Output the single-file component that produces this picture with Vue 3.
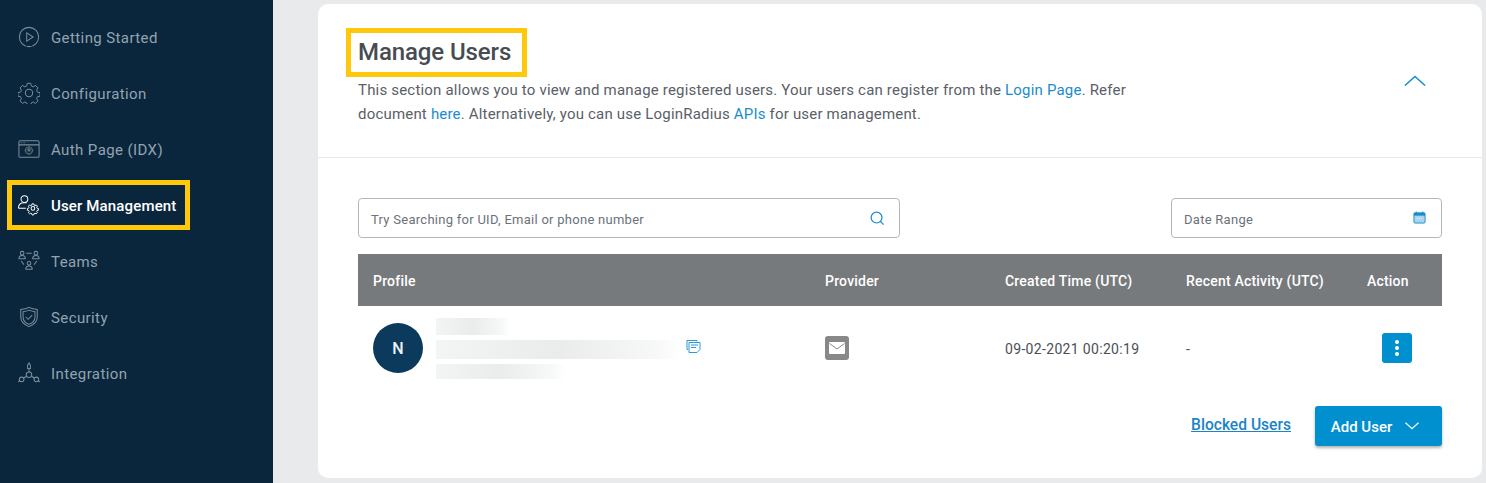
<script setup>
const navItems = [
  { label: "Getting Started", icon: "play" },
  { label: "Configuration", icon: "gear" },
  { label: "Auth Page (IDX)", icon: "auth" },
  { label: "User Management", icon: "user", active: true },
  { label: "Teams", icon: "teams" },
  { label: "Security", icon: "shield" },
  { label: "Integration", icon: "integration" },
];
const gearPath =
  "M10 1.5h4l.6 3 2.2 1 2.6-1.6 2.8 2.8-1.6 2.6 1 2.2 3 .6v4l-3 .6-1 2.2 1.6 2.6-2.8 2.8-2.6-1.6-2.2 1-.6 3h-4l-.6-3-2.2-1-2.6 1.6-2.8-2.8 1.6-2.6-1-2.2-3-.6v-4l3-.6 1-2.2-1.6-2.6 2.8-2.8 2.6 1.6 2.2-1z";
</script>

<template>
  <div class="page">
    <aside class="sidebar">
      <nav class="nav">
        <a
          v-for="item in navItems"
          :key="item.label"
          class="nav__item"
          :class="{ 'nav__item--active': item.active }"
        >
          <svg class="nav__icon" viewBox="0 0 24 24" fill="none" stroke="currentColor" stroke-width="1.1">
            <template v-if="item.icon === 'play'">
              <circle cx="12" cy="12" r="10.5" />
              <path d="M9.5 7.5v9l7-4.500z" />
            </template>
            <template v-else-if="item.icon === 'gear'">
              <path :d="gearPath" transform="translate(0.5 0) scale(0.96)" />
              <circle cx="12" cy="12" r="4" />
            </template>
            <template v-else-if="item.icon === 'auth'">
              <rect x="1" y="3" width="22" height="18" rx="1.5" />
              <path d="M1 7.5h22M3 5.2h.8M5 5.2h.8M7 5.2h.8" />
              <path :d="gearPath" transform="translate(8 9) scale(0.33)" stroke-width="2.6" />
              <circle cx="12" cy="13" r="1.2" />
            </template>
            <template v-else-if="item.icon === 'user'">
              <circle cx="7" cy="5.5" r="3.700" />
              <path d="M0.500 15.500c0-4 2-6 6-6h3M0.500 15.500h8" />
              <path :d="gearPath" transform="translate(10.500 10) scale(0.48)" stroke-width="2.200" />
              <circle cx="16.260" cy="15.760" r="2" />
            </template>
            <template v-else-if="item.icon === 'teams'">
              <circle cx="4.5" cy="3.5" r="2" />
              <path d="M1 9.5c0-2.5 1.5-3.500 3.500-3.500S8 7 8 9.500z" />
              <circle cx="19.5" cy="3.5" r="2" />
              <path d="M16 9.5c0-2.5 1.5-3.500 3.500-3.500S23 7 23 9.500z" />
              <circle cx="12" cy="14.5" r="2" />
              <path d="M8.5 21c0-2.5 1.5-3.500 3.500-3.500s3.500 1 3.500 3.500z" />
              <path d="M9 3.500h6M3.500 12l3 4M20.500 12l-3 4" />
            </template>
            <template v-else-if="item.icon === 'shield'">
              <path d="M12 1.500c3 1.500 6 2 9 2.200v8.300c0 5-3.500 8.500-9 10.500C6.500 20.500 3 17 3 12V3.700C6 3.500 9 3 12 1.500z" />
              <path d="M12 4.500c2.200 1 4.500 1.500 6.500 1.700V12c0 3.800-2.500 6.500-6.500 8-4-1.500-6.500-4.200-6.500-8V6.200c2-.2 4.300-.7 6.500-1.700z" />
              <path d="M8.500 12l2.500 2.500 4.500-4.500" />
            </template>
            <template v-else>
              <circle cx="12" cy="14" r="3" />
              <path d="M12 11V7M9.400 15.500l-3.400 2M14.600 15.500l3.400 2" />
              <path d="M10.500 7V3.500L12 1l1.500 2.500V7z" />
              <circle cx="4" cy="19" r="2.500" />
              <circle cx="20" cy="19" r="2.500" />
              <path d="M0 21.500l2-1M24 21.500l-2-1" />
            </template>
          </svg>
          <span class="nav__label">{{ item.label }}</span>
        </a>
      </nav>
    </aside>

    <main class="content">
      <section class="card">
        <header class="card__head">
          <div class="card__intro">
            <h1 class="card__title">Manage Users</h1>
            <p class="card__desc">
              This section allows you to view and manage registered users. Your users can register from the
              <a class="link">Login Page</a>. Refer<br />
              document <a class="link">here</a>. Alternatively, you can use LoginRadius
              <a class="link">APIs</a> for user management.
            </p>
          </div>
          <svg class="card__toggle" viewBox="0 0 24 12" fill="none" stroke="#0f8fd0" stroke-width="1.600">
            <path d="M1 11.500L12 1.500l11 10" />
          </svg>
        </header>

        <div class="card__body">
          <div class="filters">
            <div class="field field--search">
              <span>Try Searching for UID, Email or phone number</span>
              <svg class="field__icon" viewBox="0 0 16 16" fill="none" stroke="#1a8ccb" stroke-width="1.300">
                <circle cx="7" cy="7" r="5.800" />
                <path d="M11.200 11.200l3.300 3.300" />
              </svg>
            </div>
            <div class="field field--date">
              <span>Date Range</span>
              <svg class="field__cal" viewBox="0 0 14 14">
                <rect x="1" y="2" width="12" height="11" rx="1.200" fill="#a9d4ee" stroke="#1a8ccb" />
                <rect x="1" y="2" width="12" height="3" fill="#1a8ccb" />
                <path d="M3.500 0.500v2M10.500 0.500v2" stroke="#1a8ccb" />
                <path d="M4 8h1M6.500 8h1M9 8h1" stroke="#fff" />
              </svg>
            </div>
          </div>

          <div class="table">
            <div class="table__row table__row--head">
              <div>Profile</div>
              <div>Provider</div>
              <div>Created Time (UTC)</div>
              <div>Recent Activity (UTC)</div>
              <div>Action</div>
            </div>
            <div class="table__row">
              <div class="profile">
                <div class="avatar">N</div>
                <div class="profile__lines">
                  <div class="blur blur--name"></div>
                  <div class="blur blur--email"></div>
                  <div class="blur blur--uid"></div>
                </div>
                <svg class="copy" viewBox="0 0 15 14" fill="none" stroke="#2a9bd8" stroke-width="1">
                  <path d="M2 10.500H1V1.500h10v1" />
                  <path d="M3 3.500h11v7l-3 3H3z" fill="#fff" />
                  <path d="M5 6h7M5 8.500h5" />
                </svg>
              </div>
              <div>
                <span class="provider">
                  <svg viewBox="0 0 16 12" width="16" height="12">
                    <rect width="16" height="12" rx="1" fill="#fff" />
                    <path d="M0.500 1.500L8 7l7.500-5.500" fill="none" stroke="#888" />
                  </svg>
                </span>
              </div>
              <div class="table__text">09-02-2021 00:20:19</div>
              <div class="table__text">-</div>
              <div class="table__action">
                <button class="kebab" type="button" aria-label="Actions"><i></i><i></i><i></i></button>
              </div>
            </div>
          </div>

          <div class="actions">
            <a class="blocked">Blocked Users</a>
            <button class="add" type="button">
              <span class="add__label">Add User</span>
              <svg viewBox="0 0 14 8" width="14" height="8" fill="none" stroke="#fff" stroke-width="1.200">
                <path d="M0.500 0.700L7 6.800l6.500-6.100" />
              </svg>
            </button>
          </div>
        </div>
      </section>
    </main>
  </div>
</template>

<style>
html,
body {
  margin: 0;
  background: #e8eaec;
}
</style>

<style scoped>
.page {
  display: flex;
  height: 483px;
  overflow: hidden;
  font-family: Roboto, "Liberation Sans", sans-serif;
  color: #4a5056;
  background: #e8eaec;
}

.sidebar {
  width: 273px;
  flex: none;
  background: #0a263c;
  padding-top: 9px;
  box-sizing: border-box;
}
.nav {
  display: flex;
  flex-direction: column;
}
.nav__item {
  position: relative;
  height: 56px;
  display: flex;
  align-items: center;
  gap: 11px;
  padding-left: 18px;
  font-size: 15px;
  letter-spacing: 0.4px;
  color: #93a3b0;
}
.nav__label {
  padding-top: 2px;
}
.nav__icon {
  width: 22px;
  height: 22px;
  flex: none;
  color: #7d8d9a;
}
.nav__item--active {
  color: #fff;
  font-weight: 500;
  letter-spacing: 0.15px;
}
.nav__item--active .nav__icon {
  color: #fff;
}
.nav__item--active::after {
  content: "";
  position: absolute;
  left: 7px;
  top: 3px;
  width: 183px;
  height: 50px;
  border: 5px solid #ffc80a;
  box-sizing: border-box;
}

.content {
  flex: 1;
  padding: 4px 4px 5px 45px;
  min-width: 0;
}
.card {
  height: 100%;
  background: #fff;
  border-radius: 10px;
  box-sizing: border-box;
}
.card__head {
  height: 154px;
  box-sizing: border-box;
  border-bottom: 1px solid #e8eaec;
  padding: 24px 56px 0 40px;
  display: flex;
  justify-content: space-between;
}
.card__title {
  position: relative;
  margin: 0;
  font-size: 24px;
  line-height: 49px;
  font-weight: 500;
  color: #474c52;
  letter-spacing: -0.1px;
}
.card__title::after {
  content: "";
  position: absolute;
  left: -12px;
  top: 0;
  width: 181px;
  height: 49px;
  border: 5px solid #ffc80a;
  box-sizing: border-box;
}
.card__desc {
  margin: 1px 0 0;
  font-size: 15px;
  letter-spacing: 0.19px;
  line-height: 24px;
  color: #5a6067;
  white-space: nowrap;
}
.card__toggle {
  width: 22px;
  height: 11px;
  margin-top: 47px;
}
.link {
  color: #1a8ccb;
}

.card__body {
  padding: 40px 40px 0;
}
.filters {
  display: flex;
  justify-content: space-between;
}
.field {
  height: 40px;
  box-sizing: border-box;
  border: 1px solid #b5b7b9;
  border-radius: 4px;
  padding: 0 14px 0 12px;
  display: flex;
  align-items: center;
  justify-content: space-between;
  font-size: 13px;
  letter-spacing: 0.27px;
  color: #6c7279;
}
.field > span {
  padding-top: 2px;
}
.field--search {
  width: 542px;
}
.field--date {
  width: 271px;
}
.field__icon {
  width: 15px;
  height: 15px;
}
.field__cal {
  width: 13px;
  height: 13px;
  margin: -2px 1px 0 0;
}

.table {
  margin-top: 16px;
}
.table__row {
  display: grid;
  grid-template-columns: 452px 180px 181px 181px 90px;
  align-items: center;
  height: 84px;
  font-size: 14px;
}
.table__row > div {
  padding-left: 15px;
}
.table__row--head {
  height: 52px;
  background: #777a7d;
  color: #fff;
  font-weight: 500;
  letter-spacing: 0.2px;
}
.table__row--head > div {
  padding-top: 2px;
}
.table__row > .table__text {
  padding-top: 2px;
  letter-spacing: 0.33px;
}
.table__row > .table__action {
  padding-left: 30px;
}
.profile {
  display: flex;
  align-items: center;
}
.avatar {
  width: 50px;
  height: 50px;
  box-sizing: border-box;
  padding-top: 1px;
  border-radius: 50%;
  background: #0b3a5c;
  color: #eef2f5;
  display: flex;
  align-items: center;
  justify-content: center;
  font-weight: 500;
  font-size: 16px;
}
.profile__lines {
  margin-left: 13px;
  display: flex;
  flex-direction: column;
  gap: 5px;
}
.blur {
  height: 17px;
  background: linear-gradient(90deg, #f3f4f4, #eaecec 50%, #f7f8f8 90%, #fff);
}
.blur--name {
  width: 74px;
}
.blur--email {
  width: 245px;
  height: 19px;
}
.blur--uid {
  width: 129px;
  height: 15px;
}
.copy {
  width: 15px;
  height: 14px;
  margin: -4px 0 0 5px;
}
.provider {
  width: 24px;
  height: 24px;
  border-radius: 3px;
  background: #888;
  display: flex;
  align-items: center;
  justify-content: center;
}
.kebab {
  width: 30px;
  height: 30px;
  padding: 0;
  border: 0;
  border-radius: 3px;
  background: #0090d0;
  display: flex;
  flex-direction: column;
  align-items: center;
  justify-content: center;
  gap: 2px;
}
.kebab i {
  width: 4px;
  height: 4px;
  border-radius: 50%;
  background: #fff;
}

.actions {
  margin-top: 16px;
  display: flex;
  justify-content: flex-end;
  align-items: center;
  gap: 24px;
}
.blocked {
  font-size: 15.6px;
  font-weight: 500;
  color: #1a84c4;
  text-decoration: underline;
  margin-top: -3px;
}
.add {
  width: 127px;
  height: 40px;
  padding: 0 7px 0 0;
  border: 0;
  border-radius: 3px;
  background: #0090d0;
  color: #fff;
  font-family: inherit;
  font-size: 15px;
  font-weight: 500;
  display: flex;
  align-items: center;
  justify-content: center;
  gap: 13px;
  box-shadow: 0 2px 3px rgba(0, 0, 0, 0.3);
}
.add__label {
  padding-top: 2px;
}
</style>
